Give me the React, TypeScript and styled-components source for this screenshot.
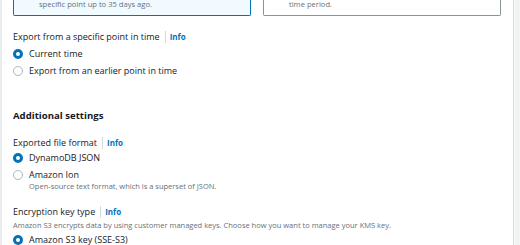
import React from 'react';
import styled, { createGlobalStyle } from 'styled-components';

const GlobalStyle = createGlobalStyle`
  html, body {
    margin: 0;
    padding: 0;
    background: #f2f3f3;
    font-family: 'Open Sans', 'Liberation Sans', Arial, sans-serif;
    color: #16191f;
    overflow: hidden;
  }
`;

const Page = styled.div`
  display: flex;
  height: 245px;
`;

const Panel = styled.div`
  width: 511px;
  background: #fff;
  border-left: 2px solid #eaeded;
  border-right: 1px solid #d5dbdb;
  display: flex;
  flex-direction: column;
`;

const Gutter = styled.div`
  flex: 1;
  border-left: 1px solid #fafafa;
  background: #f2f3f3;
`;

const Section = styled.div<{ $top?: number; $bottom?: number }>`
  padding: ${(p) => p.$top ?? 0}px 12px ${(p) => p.$bottom ?? 0}px 11px;
  display: flex;
  flex-direction: column;
`;

const Divider = styled.div`
  height: 1px;
  background: #eaeded;
`;

const Tiles = styled.div`
  display: grid;
  grid-template-columns: 1fr 1fr;
  gap: 12px;
`;

const Tile = styled.div<{ $selected?: boolean }>`
  border: 1px solid ${(p) => (p.$selected ? '#0073bb' : '#879596')};
  border-top: none;
  border-radius: 0 0 2px 2px;
  background: ${(p) => (p.$selected ? '#f1faff' : '#fff')};
  padding: 0 12px 7px 25px;
  font-size: 7.6px;
  line-height: 8px;
  color: #687078;
`;

const Field = styled.div<{ $gap: number }>`
  margin-top: ${(p) => p.$gap}px;
  display: flex;
  flex-direction: column;
`;

const LabelRow = styled.div`
  display: flex;
  align-items: center;
  font-size: 9px;
  line-height: 13px;
`;

const Sep = styled.span`
  width: 1px;
  height: 12px;
  background: #d5dbdb;
  margin: 0 4px 0 5px;
`;

const InfoLink = styled.a`
  color: #0073bb;
  font-weight: 700;
  font-size: 8px;
  text-decoration: none;
`;

const Heading = styled.div`
  font-size: 9.6px;
  font-weight: 700;
  line-height: 14px;
`;

const Hint = styled.div`
  font-size: 7.5px;
  line-height: 12px;
  color: #687078;
  margin-top: 1px;
`;

const Options = styled.div<{ $offset?: number }>`
  margin-top: ${(p) => p.$offset ?? 0}px;
`;

const Option = styled.label`
  display: flex;
  align-items: flex-start;
  gap: 6px;
  padding: 2px 0;
`;

const Radio = styled.span<{ $checked?: boolean }>`
  flex: none;
  box-sizing: border-box;
  width: 10px;
  height: 10px;
  margin-top: 1.5px;
  border-radius: 50%;
  background: #fff;
  border: ${(p) => (p.$checked ? '3px solid #0073bb' : '1px solid #aab7b8')};
`;

const OptionText = styled.div`
  display: flex;
  flex-direction: column;
`;

const OptionLabel = styled.span`
  font-size: 9px;
  line-height: 13px;
`;

const OptionHint = styled.span`
  font-size: 7.5px;
  line-height: 11px;
  color: #687078;
`;

type Opt = { label: string; hint?: string; checked?: boolean };

const RadioGroup = ({ options, offset }: { options: Opt[]; offset?: number }) => (
  <Options $offset={offset}>
    {options.map((o) => (
      <Option key={o.label}>
        <Radio $checked={o.checked} />
        <OptionText>
          <OptionLabel>{o.label}</OptionLabel>
          {o.hint && <OptionHint>{o.hint}</OptionHint>}
        </OptionText>
      </Option>
    ))}
  </Options>
);

const Label = ({ children }: { children: React.ReactNode }) => (
  <LabelRow>
    {children}
    <Sep />
    <InfoLink href="#">Info</InfoLink>
  </LabelRow>
);

export default function App() {
  return (
    <>
      <GlobalStyle />
      <Page>
        <Panel>
          <Section $bottom={11}>
            <Tiles>
              <Tile $selected>specific point up to 35 days ago.</Tile>
              <Tile>time period.</Tile>
            </Tiles>
            <Field $gap={14}>
              <Label>Export from a specific point in time</Label>
              <RadioGroup
                offset={2}
                options={[
                  { label: 'Current time', checked: true },
                  { label: 'Export from an earlier point in time' },
                ]}
              />
            </Field>
          </Section>
          <Divider />
          <Section $top={19}>
            <Heading>Additional settings</Heading>
            <Field $gap={13}>
              <Label>Exported file format</Label>
              <RadioGroup
                options={[
                  { label: 'DynamoDB JSON', checked: true },
                  { label: 'Amazon Ion', hint: 'Open-source text format, which is a superset of JSON.' },
                ]}
              />
            </Field>
            <Field $gap={11}>
              <Label>Encryption key type</Label>
              <Hint>
                Amazon S3 encrypts data by using customer managed keys. Choose how you want to manage your KMS key.
              </Hint>
              <RadioGroup options={[{ label: 'Amazon S3 key (SSE-S3)', checked: true }]} />
            </Field>
          </Section>
        </Panel>
        <Gutter />
      </Page>
    </>
  );
}
